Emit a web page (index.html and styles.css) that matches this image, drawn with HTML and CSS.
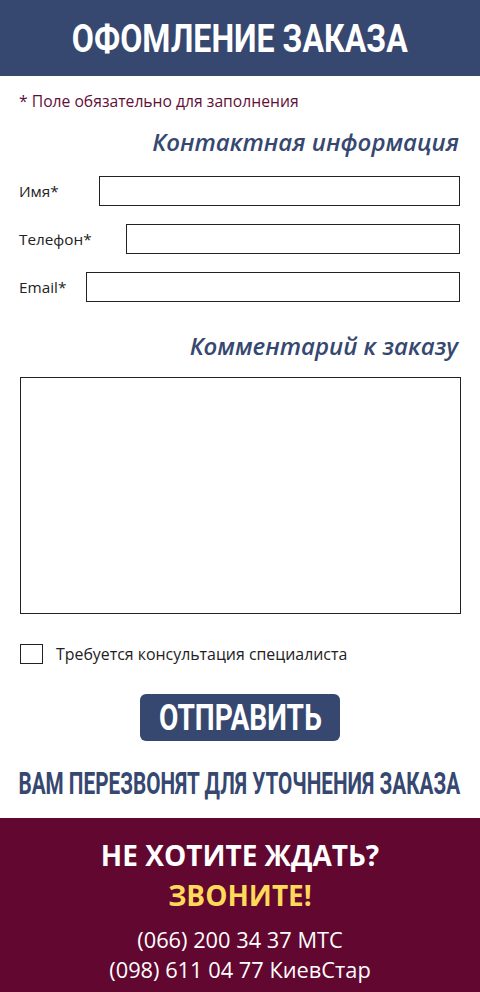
FILE: index.html
```html
<!DOCTYPE html>
<html lang="ru">
<head>
<meta charset="utf-8">
<title>Оформление заказа</title>
<link rel="stylesheet" href="styles.css">
</head>
<body>
<div class="page">
  <header class="top">
    <h1 class="top-title"><span class="cond cond-title">ОФОМЛЕНИЕ ЗАКАЗА</span></h1>
  </header>
  <form class="form">
    <p class="note">* Поле обязательно для заполнения</p>
    <h2 class="section-title section-title-contact">Контактная информация</h2>
    <div class="field field-name">
      <label class="field-label">Имя*</label>
      <input class="field-input" type="text">
    </div>
    <div class="field field-phone">
      <label class="field-label">Телефон*</label>
      <input class="field-input" type="text">
    </div>
    <div class="field field-email">
      <label class="field-label">Email*</label>
      <input class="field-input" type="text">
    </div>
    <h2 class="section-title section-title-comment">Комментарий к заказу</h2>
    <textarea class="comment"></textarea>
    <label class="check">
      <span class="check-box"></span>
      <span class="check-text">Требуется консультация специалиста</span>
    </label>
    <div class="submit-row">
      <button type="button" class="submit"><span class="cond cond-btn">ОТПРАВИТЬ</span></button>
    </div>
    <p class="callback"><span class="cond cond-callback">ВАМ ПЕРЕЗВОНЯТ ДЛЯ УТОЧНЕНИЯ ЗАКАЗА</span></p>
  </form>
  <footer class="bottom">
    <p class="bottom-title">НЕ ХОТИТЕ ЖДАТЬ?</p>
    <p class="bottom-call">ЗВОНИТЕ!</p>
    <p class="phone phone-first">(066) 200 34 37 МТС</p>
    <p class="phone">(098) 611 04 77 КиевСтар</p>
  </footer>
</div>
</body>
</html>
```
FILE: styles.css
```css
* { box-sizing: border-box; }
html, body { margin: 0; padding: 0; background: #fff; }
body {
  width: 480px;
  height: 992px;
  overflow: hidden;
  font-family: "Open Sans", "Liberation Sans", sans-serif;
  color: #222;
}
.page { display: flex; flex-direction: column; height: 992px; }

.cond {
  display: inline-block;
  white-space: nowrap;
  font-family: Roboto, "Liberation Sans", sans-serif;
  font-weight: 700;
  transform-origin: center;
}

.top {
  background: #364870;
  height: 76px;
  display: flex;
  align-items: center;
  justify-content: center;
}
.top-title {
  margin: 0;
  color: #fff;
  font-size: 38px;
  line-height: 1;
  white-space: nowrap;
  text-align: center;
}
.cond-title { transform: scaleX(0.845); }

.form { display: flex; flex-direction: column; padding: 0 20px 0 19px; flex: 1; }
.note {
  margin: 15px 0 0;
  color: #5f0f37;
  font-size: 15.7px;
  line-height: 20px;
}
.section-title {
  margin: 0;
  text-align: right;
  color: #364870;
  font-style: italic;
  font-weight: 600;
  font-size: 24px;
  line-height: 30px;
  padding-right: 1px;
}
.section-title-contact { margin-top: 16px; }
.section-title-comment { margin-top: 29px; padding-right: 2px; }

.field { display: flex; align-items: center; height: 30px; margin-top: 18px; }
.field-name { margin-top: 19px; }
.field-label { font-size: 15.3px; color: #222; flex: none; }
.field-input {
  height: 30px;
  border: 1px solid #222;
  border-radius: 0;
  background: #fff;
  margin-left: auto;
  padding: 0 6px;
  font: inherit;
}
.field-name .field-input { width: 361px; }
.field-phone .field-input { width: 334px; }
.field-email .field-input { width: 374px; }

.comment {
  display: block;
  margin: 16px 0 0 1px;
  width: 441px;
  height: 237px;
  border: 1px solid #222;
  border-radius: 0;
  resize: none;
  font: inherit;
}

.check { display: flex; align-items: center; height: 20px; margin: 30px 0 0 1px; }
.check-box {
  width: 23px;
  height: 20px;
  border: 1px solid #222;
  flex: none;
}
.check-text { margin-left: 13px; font-size: 15.9px; line-height: 20px; color: #222; }

.submit-row { display: flex; justify-content: center; margin-top: 30px; }
.submit {
  width: 200px;
  height: 47px;
  margin-left: 1px;
  border: 0;
  border-radius: 6px;
  background: #364870;
  color: #fff;
  font-size: 36px;
  line-height: 1;
  padding: 0;
  display: flex;
  align-items: center;
  justify-content: center;
  overflow: visible;
}
.cond-btn { transform: scaleX(0.78); }

.callback {
  margin: 26px 0 0;
  text-align: center;
  color: #364870;
  font-size: 32px;
  line-height: 32px;
  white-space: nowrap;
  display: flex;
  justify-content: center;
}
.cond-callback { transform: scaleX(0.647); }

.bottom {
  margin-top: auto;
  height: 174px;
  background: #62072f;
  text-align: center;
  padding-top: 19px;
}
.bottom p { margin: 0; }
.bottom-title {
  color: #fff;
  font-weight: 700;
  font-size: 28px;
  line-height: 36px;
}
.bottom .bottom-call {
  color: #ffd95a;
  font-weight: 700;
  font-size: 28px;
  line-height: 36px;
  margin-top: 4px;
}
.phone {
  color: #fff;
  font-size: 21.8px;
  line-height: 30px;
}
.bottom .phone-first { margin-top: 12px; }
```
